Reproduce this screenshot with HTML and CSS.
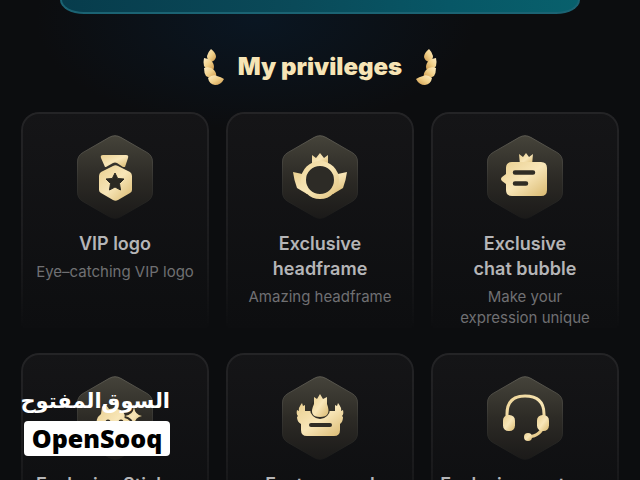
FILE: index.html
```html
<!DOCTYPE html>
<html lang="en">
<head>
  <meta charset="UTF-8" />
  <meta name="viewport" content="width=device-width, initial-scale=1" />
  <title>My privileges</title>
  <link rel="stylesheet" href="styles.css">
</head>
<body>
  <svg class="defs" aria-hidden="true">
    <defs>
      <linearGradient id="gold" x1="0" y1="0" x2="1" y2="1">
        <stop offset="0" stop-color="#e9cf90" />
        <stop offset="0.5" stop-color="#f8e6b8" />
        <stop offset="1" stop-color="#d9b970" />
      </linearGradient>
      <linearGradient id="goldLine" gradientUnits="userSpaceOnUse" x1="16" y1="18" x2="62" y2="66">
        <stop offset="0" stop-color="#ecd293" />
        <stop offset="0.5" stop-color="#f8e6b6" />
        <stop offset="1" stop-color="#dbba72" />
      </linearGradient>
      <linearGradient id="leaf" x1="0" y1="0" x2="1" y2="1">
        <stop offset="0" stop-color="#ffeec5" />
        <stop offset="0.5" stop-color="#f0cf88" />
        <stop offset="1" stop-color="#cb9549" />
      </linearGradient>
      <linearGradient id="hexFill" x1="0" y1="0" x2="0" y2="1">
        <stop offset="0" stop-color="#45433a" />
        <stop offset="0.5" stop-color="#2d2b26" />
        <stop offset="1" stop-color="#1b1a19" />
      </linearGradient>
      <linearGradient id="hexEdge" x1="0" y1="0" x2="0" y2="1">
        <stop offset="0" stop-color="#5c5a51" />
        <stop offset="0.5" stop-color="#363531" />
        <stop offset="1" stop-color="#1a1a19" />
      </linearGradient>
      <path id="hex" d="M32 2.5Q38 -1 44 2.5L70 17.500Q75.500 20.500 75.500 27V57Q75.500 63.500 70 66.500L44 81.500Q38 85 32 81.500L6 66.500Q0.500 63.500 0.500 57V27Q0.500 20.500 6 17.500Z" fill="url(#hexFill)" stroke="url(#hexEdge)" />
      <g id="laurel" fill="url(#leaf)">
        <path d="M8 0Q13 4 13 8Q12 12 8 13Q4 11 4 7Q5 3 8 0Z" />
        <path d="M1 9Q8 10 10 14Q12 18 10 21Q3 21 1 17Q0 13 1 9Z" />
        <path d="M1 19Q7 17 11 21Q14 24 13 29Q7 30 3 27Q1 24 1 19Z" />
        <path d="M5 29Q10 25 14 27Q18 28 21 30Q18 36 12 36Q6 35 5 29Z" />
      </g>
    </defs>
  </svg>

  <div class="banner"></div>

  <main class="privileges">
    <header class="heading">
      <svg class="laurel" viewBox="0 0 21 36"><use href="#laurel" /></svg>
      <h1>My privileges</h1>
      <svg class="laurel flip" viewBox="0 0 21 36"><use href="#laurel" /></svg>
    </header>

    <section class="grid">
      <article class="card">
        <svg class="icon" viewBox="0 0 76 84">
          <use href="#hex" />
          <path d="M26 20H49Q52 20 51 23L48 32H46L40 28Q38 27 36 28L29 32H28L24 23Q23 20 26 20Z" fill="url(#gold)" />
          <path d="M36 31Q38.500 29.500 41 31L53 37Q55 38.500 55 41V55Q55 57 53 58L41 65Q38.500 66.500 36 65L24 58Q22 57 22 55V41Q22 38.500 24 37Z" fill="url(#gold)" />
          <path d="M38 38L40.700 43.500L47 44L42.500 48.500L43.500 55L38 52L32.500 55L33.500 48.500L29 44L35.300 43.500Z" fill="#2b2922" stroke="#2b2922" stroke-linejoin="round" />
        </svg>
        <h2>VIP logo</h2>
        <p>Eye–catching VIP logo</p>
      </article>

      <article class="card">
        <svg class="icon" viewBox="0 0 76 84">
          <use href="#hex" />
          <path d="M30 30V20L34 23L38 18L42 23L46 20V30Z" fill="url(#gold)" />
          <path d="M11 37L25 40V59L15 53Q12 45 11 37ZM65 37L51 40V59L61 53Q64 45 65 37Z" fill="url(#gold)" />
          <circle cx="38" cy="45" r="16.500" fill="#2d2b26" stroke="url(#goldLine)" stroke-width="5" />
        </svg>
        <h2>Exclusive<br>headframe</h2>
        <p>Amazing headframe</p>
      </article>

      <article class="card">
        <svg class="icon" viewBox="0 0 76 84">
          <use href="#hex" />
          <path d="M33 30L32 19L36 22L39 18L42 22L46 19L45 30Z" fill="url(#gold)" />
          <path d="M25 27H54Q60 27 60 33V55Q60 61 54 61H25Q19 61 19 55V49L15 46Q13 44 15 42L19 39V33Q19 27 25 27Z" fill="url(#gold)" />
          <path d="M28 37.500H46M28 48.500H39" fill="none" stroke="#302d25" stroke-width="4.500" stroke-linecap="round" />
        </svg>
        <h2>Exclusive<br>chat bubble</h2>
        <p>Make your<br>expression unique</p>
      </article>

      <article class="card">
        <svg class="icon" viewBox="0 0 76 84">
          <use href="#hex" />
          <path d="M21 52Q17 43 24 38L25 31Q28 26 32 33Q44 31 48 39Q50 43 53 44Q52 66 38 66Q24 65 21 52Z" fill="url(#gold)" />
          <path d="M57 31Q58 39 65 40Q58 41 57 49Q56 42 48 40Q56 39 57 31Z" fill="url(#gold)" stroke="#302d25" stroke-width="4" paint-order="stroke" />
          <circle cx="31" cy="46" r="2.500" fill="#302d25" />
          <circle cx="44" cy="46" r="2.500" fill="#302d25" />
        </svg>
        <h2>Exclusive Stickers</h2>
      </article>

      <article class="card">
        <svg class="icon" viewBox="0 0 76 84">
          <use href="#hex" />
          <path d="M20 27L21 30L23 29V35H53V29L55 30L56 27Q60 32 59 35L61 34Q62 38 60 40L61 41Q61 46 58 48V54Q58 60 52 60H25Q19 60 19 54V48Q15 46 15 41L16 40Q14 38 15 34L17 35Q16 32 20 27Z" fill="url(#gold)" />
          <circle cx="38" cy="33" r="10" fill="#302d25" />
          <path d="M32 21L35 23L38 18L41 23L45 21L45 28Q50 41 38 41Q26 41 32 28Z" fill="url(#gold)" />
          <path d="M29 49H48" stroke="#302d25" stroke-width="4" stroke-linecap="round" />
        </svg>
        <h2>Feature card</h2>
      </article>

      <article class="card">
        <svg class="icon" viewBox="0 0 76 84">
          <use href="#hex" />
          <path d="M20 45V38Q20 20 38 20Q57 20 57 38V47Q55 60 41 61" fill="none" stroke="url(#goldLine)" stroke-width="3" />
          <rect x="16" y="39" width="12" height="16" rx="5.500" fill="url(#gold)" />
          <rect x="50" y="39" width="12" height="16" rx="5.500" fill="url(#gold)" />
          <circle cx="41" cy="61" r="4" fill="url(#gold)" />
        </svg>
        <h2>Exclusive customer<br>service</h2>
      </article>
    </section>
  </main>

  <div class="watermark">
    <span class="watermark-ar" lang="ar" dir="rtl">السوق‌المفتوح</span>
    <span class="watermark-en">OpenSooq</span>
  </div>
</body>
</html>
```

FILE: styles.css
```css
* { box-sizing: border-box; }
body {
  margin: 0;
  height: 100vh;
  overflow: hidden;
  position: relative;
  font-family: Inter, sans-serif;
  color: #b5b5b7;
  background-color: #0c0d0f;
  background-image: radial-gradient(ellipse 220px 110px at 40% 20px, #0a1622, transparent);
}
.defs {
  position: absolute;
  width: 0;
  height: 0;
}
.banner {
  height: 14px;
  margin: 0 60px;
  border: 2px solid #1b6373;
  border-top: none;
  border-radius: 0 0 24px 24px / 0 0 14px 14px;
  background: linear-gradient(90deg, #073c4c, #0a4a59 45%, #075766 75%, #08606c);
}
.privileges {
  padding: 35px 21px 0;
}
.heading {
  display: flex;
  justify-content: center;
  align-items: center;
  gap: 14px;
  height: 36px;
}
.heading h1 {
  margin: 0;
  font-size: 24px;
  line-height: 36px;
  font-weight: 900;
  color: #f6e4b5;
}
.laurel {
  width: 21px;
  height: 36px;
}
.flip {
  transform: scaleX(-1);
}
.grid {
  display: grid;
  grid-template-columns: repeat(3, minmax(0, 1fr));
  gap: 25px 17px;
  margin-top: 27px;
}
.card {
  position: relative;
  padding: 23px 8px 0;
  text-align: center;
  border-radius: 18px 18px 0 0;
  background: linear-gradient(#151517, #0d0e10);
}
/* outline that fades out towards the bottom */
.card::before {
  content: "";
  position: absolute;
  inset: 0;
  border: 2px solid #242426;
  border-bottom: none;
  border-radius: inherit;
  -webkit-mask-image: linear-gradient(#000, rgba(0, 0, 0, 0.5) 70%, transparent);
  mask-image: linear-gradient(#000, rgba(0, 0, 0, 0.5) 70%, transparent);
}
.icon {
  display: block;
  width: 76px;
  height: 84px;
  margin: 0 auto 12px;
}
.card h2 {
  margin: 0;
  font-size: 18px;
  line-height: 25px;
  font-weight: 600;
  white-space: nowrap;
}
.card p {
  margin: 5px 0 0;
  font-size: 15px;
  line-height: 21px;
  color: #707073;
}
.watermark {
  position: absolute;
  left: 24px;
  bottom: 24px;
  width: 146px;
  display: flex;
  flex-direction: column;
}
.watermark-ar {
  font-family: "DejaVu Sans", sans-serif;
  font-size: 21px;
  line-height: 40px;
  font-weight: 700;
  color: #fff;
  white-space: nowrap;
}
.watermark-en {
  font-family: "Noto Sans", sans-serif;
  font-size: 25px;
  line-height: 35px;
  font-weight: 900;
  text-align: center;
  color: #000;
  background-color: #fff;
  border-radius: 4px;
}
```
